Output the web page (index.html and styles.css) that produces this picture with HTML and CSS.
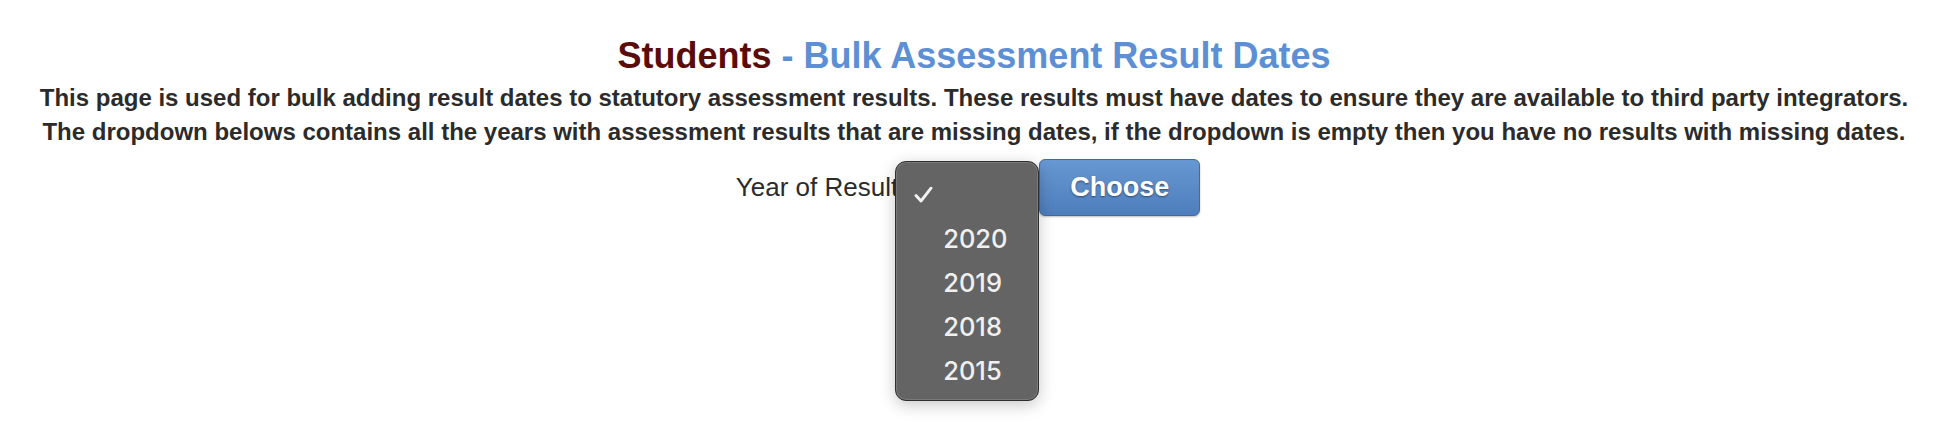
FILE: index.html
```html
<!DOCTYPE html>
<html>
<head>
<meta charset="utf-8">
<link rel="stylesheet" href="styles.css">
</head>
<body>
<div class="page">
  <h1 class="title"><span class="title-main">Students</span> <span class="title-sub">- Bulk Assessment Result Dates</span></h1>
  <p class="intro">This page is used for bulk adding result dates to statutory assessment results. These results must have dates to ensure they are available to third party integrators.<br>The dropdown belows contains all the years with assessment results that are missing dates, if the dropdown is empty then you have no results with missing dates.</p>
  <form class="row">
    <label class="label">Year of Result</label>
    <div class="select-wrap">
      <div class="select"></div>
      <ul class="menu">
        <li class="item checked"><svg class="check" viewBox="0 0 19 17" width="19" height="17"><path d="M2 9.5 L7 15 L17 2.2" fill="none" stroke="#f2f2f2" stroke-width="2.9" stroke-linecap="round" stroke-linejoin="round"/></svg></li>
        <li class="item">2020</li>
        <li class="item">2019</li>
        <li class="item">2018</li>
        <li class="item">2015</li>
      </ul>
    </div>
    <button type="button" class="btn">Choose</button>
  </form>
</div>
</body>
</html>
```
FILE: styles.css
```css
html, body {
  margin: 0;
  padding: 0;
  background: #ffffff;
}
body {
  min-height: 432px;
  font-family: "Liberation Sans", Arial, sans-serif;
  color: #333333;
}
.page {
  display: flex;
  flex-direction: column;
  align-items: center;
  padding-top: 34px;
}
.title {
  margin: 0;
  font-size: 36px;
  line-height: 44px;
  font-weight: bold;
}
.title-main { color: #5a0c0a; }
.title-sub { color: #5d8fd4; }
.intro {
  margin: 3px 0 0;
  font-size: 24px;
  line-height: 33.5px;
  font-weight: bold;
  text-align: center;
  color: #2b2b2b;
}
.row {
  display: flex;
  align-items: center;
  margin-top: 11px;
  margin-left: -12px;
}
.label {
  font-size: 26px;
  color: #2b2b2b;
}
.select-wrap {
  position: relative;
  width: 141px;
  height: 40px;
}
.select {
  width: 100%;
  height: 100%;
}
.menu {
  position: absolute;
  left: -3px;
  top: -6.5px;
  width: 144px;
  height: 240px;
  box-sizing: border-box;
  margin: 0;
  padding: 10px 0 9px;
  list-style: none;
  background: #646464;
  border: 1px solid #2e2e2e;
  border-radius: 11px;
  box-shadow: inset 0 0 0 1px #7a7a7a, 0 4px 16px rgba(0,0,0,0.22);
  font-family: Inter, "Noto Sans", sans-serif;
  font-size: 25.5px;
  font-weight: 500;
  color: #f0f0f0;
  z-index: 2;
}
.item {
  height: 44px;
  display: flex;
  align-items: center;
  padding-left: 47px;
}
.item.checked {
  padding-left: 18px;
}
.check {
  display: block;
}
.btn {
  width: 161px;
  height: 57px;
  border: 1px solid #3f6aa2;
  border-radius: 6px;
  background: linear-gradient(#6898d3, #4d7dbb);
  color: #ffffff;
  font-family: "Liberation Sans", Arial, sans-serif;
  font-weight: bold;
  font-size: 27px;
  text-shadow: 0 1px 2px rgba(0,0,0,0.45);
  box-shadow: 0 1px 2px rgba(0,0,0,0.25);
  padding: 0;
}
```
